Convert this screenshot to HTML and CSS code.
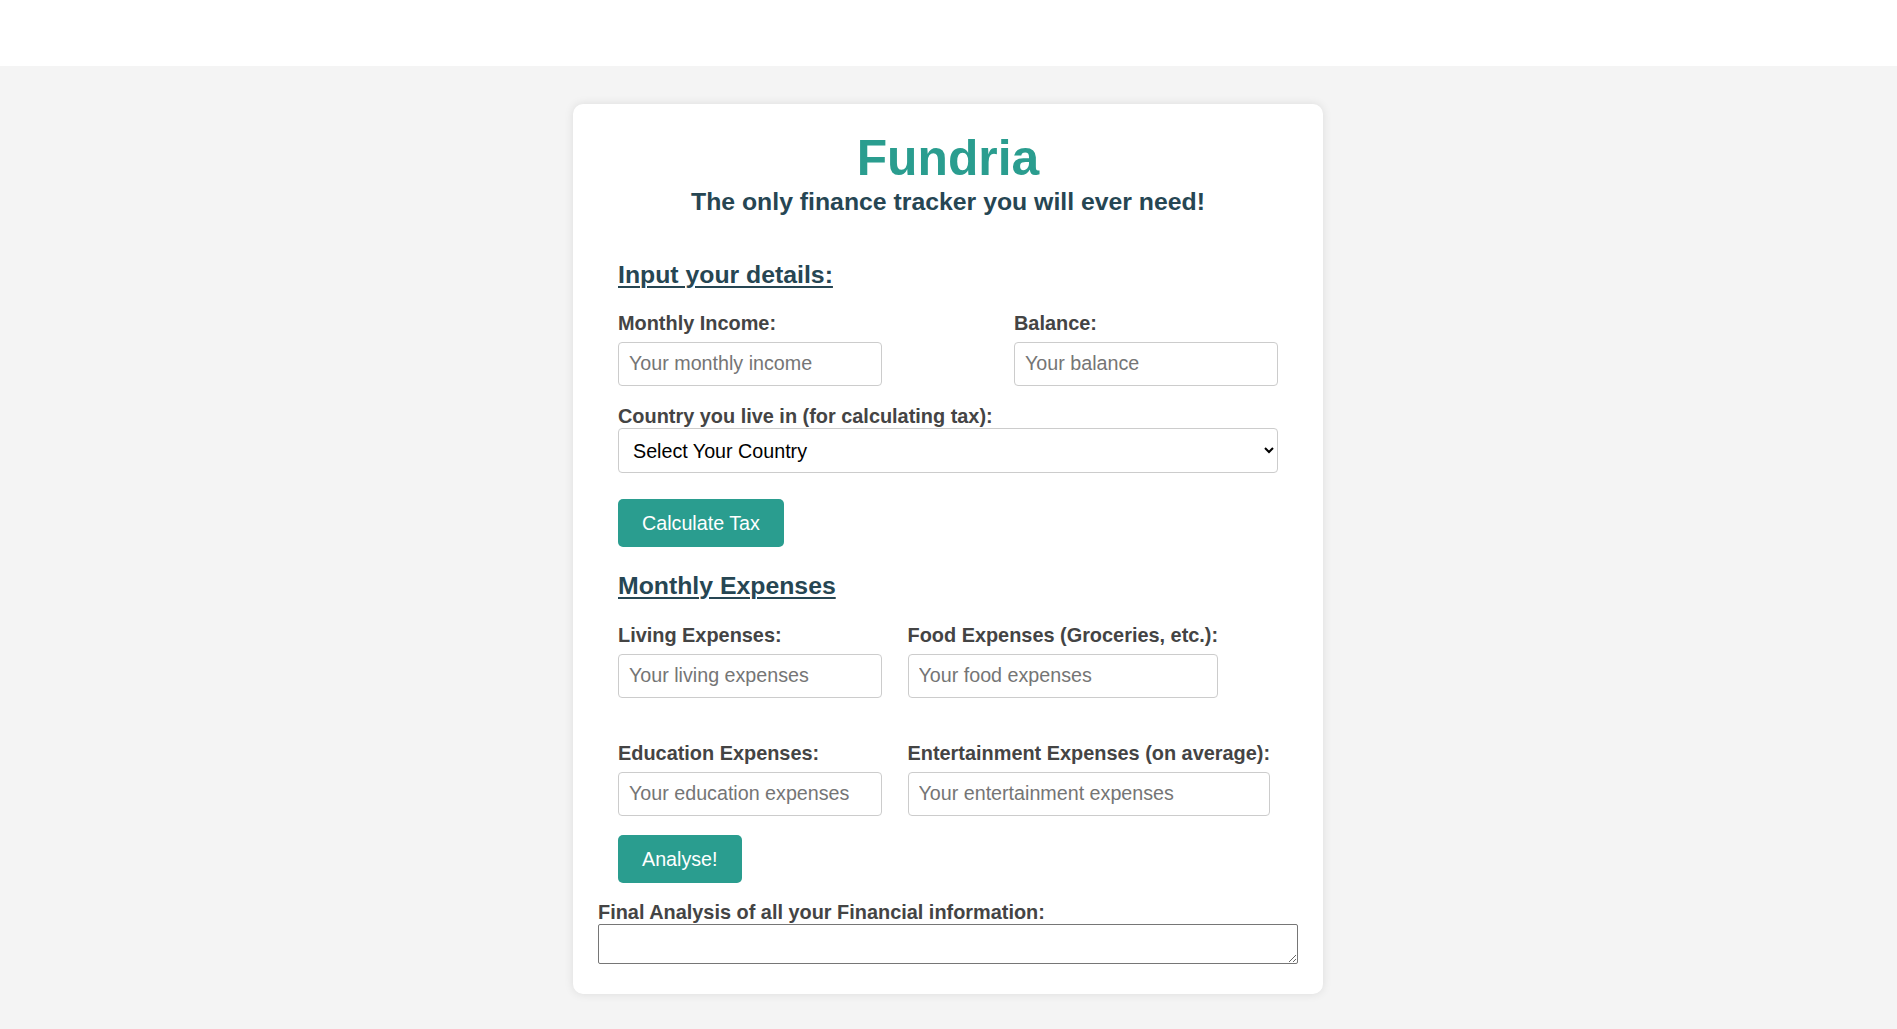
FILE: index.html
```html
<!DOCTYPE html>
<html lang="en">
<head>
<meta charset="utf-8">
<title>Fundria</title>
<link rel="stylesheet" href="styles.css">
</head>
<body>
<header class="topbar"></header>
<main class="page">
  <div class="card">
    <h1 class="brand">Fundria</h1>
    <p class="tagline">The only finance tracker you will ever need!</p>
    <form class="form">
      <h2 class="section-title">Input your details:</h2>
      <div class="row row-split">
        <div class="field field-40">
          <label class="field-label">Monthly Income:</label>
          <input class="text-input" type="text" placeholder="Your monthly income">
        </div>
        <div class="field field-40">
          <label class="field-label">Balance:</label>
          <input class="text-input" type="text" placeholder="Your balance">
        </div>
      </div>
      <div class="field field-country">
        <label class="field-label">Country you live in (for calculating tax):</label>
        <select class="select-input">
          <option>Select Your Country</option>
        </select>
      </div>
      <button class="btn btn-tax" type="button">Calculate Tax</button>

      <h2 class="section-title section-title-expenses">Monthly Expenses</h2>
      <div class="row row-gap row-living">
        <div class="field field-40">
          <label class="field-label">Living Expenses:</label>
          <input class="text-input" type="text" placeholder="Your living expenses">
        </div>
        <div class="field field-fit">
          <label class="field-label">Food Expenses (Groceries, etc.):</label>
          <input class="text-input" type="text" placeholder="Your food expenses">
        </div>
      </div>
      <div class="row row-gap row-education">
        <div class="field field-40">
          <label class="field-label">Education Expenses:</label>
          <input class="text-input" type="text" placeholder="Your education expenses">
        </div>
        <div class="field field-fit">
          <label class="field-label">Entertainment Expenses (on average):</label>
          <input class="text-input" type="text" placeholder="Your entertainment expenses">
        </div>
      </div>
      <button class="btn btn-analyse" type="button">Analyse!</button>
    </form>
    <label class="field-label final-label">Final Analysis of all your Financial information:</label>
    <textarea class="final-output"></textarea>
  </div>
</main>
</body>
</html>
```

FILE: styles.css
```css
html, body {
  margin: 0;
  padding: 0;
}

body {
  background: #f4f4f4;
  font-family: "Liberation Sans", Arial, sans-serif;
  color: #444;
  min-height: 1029px;
}

.topbar {
  height: 66px;
  background: #ffffff;
}

.page {
  padding: 38px 1px 0 0;
}

.card {
  width: 700px;
  margin: 0 auto;
  padding: 25px;
  background: #ffffff;
  border-radius: 10px;
  box-shadow: 0 0 10px rgba(0, 0, 0, 0.1);
}

.brand {
  margin: 0;
  text-align: center;
  font-size: 49.8px;
  font-weight: bold;
  line-height: 59px;
  color: #2a9d8f;
}

.tagline {
  margin: 0;
  text-align: center;
  font-size: 24.8px;
  font-weight: bold;
  line-height: 28.5px;
  color: #264653;
}

.form {
  padding: 0 20px;
}

.section-title {
  margin: 44px 0 0;
  font-size: 24.8px;
  font-weight: bold;
  line-height: normal;
  color: #264653;
  text-decoration: underline;
  text-underline-offset: 3px;
  text-decoration-thickness: 2px;
}

.section-title-expenses {
  margin-top: 25px;
}

.row {
  display: flex;
}

.row-split {
  justify-content: space-between;
  margin-top: 23px;
}

.row-gap {
  gap: 25.5px;
}

.row-living {
  margin-top: 24px;
}

.row-education {
  margin-top: 44px;
}

.field-40 {
  width: 40%;
}

.field-fit {
  width: max-content;
}

.field-label {
  display: block;
  font-size: 19.9px;
  font-weight: bold;
  line-height: 22.6px;
  color: #444;
}

.text-input {
  display: block;
  box-sizing: border-box;
  width: 100%;
  height: 44px;
  margin-top: 7.5px;
  padding: 10px;
  border: 1px solid #ccc;
  border-radius: 4px;
  font-family: "Liberation Sans", Arial, sans-serif;
  font-size: 19.7px;
  line-height: 22px;
  color: #333;
  background: #fff;
}

.text-input::placeholder {
  color: #757575;
}

.field-country {
  margin-top: 19.5px;
}

.select-input {
  display: block;
  box-sizing: border-box;
  width: 100%;
  height: 45px;
  margin-top: 0.5px;
  padding: 0 10px;
  border: 1px solid #ccc;
  border-radius: 4px;
  font-family: "Liberation Sans", Arial, sans-serif;
  font-size: 19.7px;
  color: #000;
  background: #fff;
}

.btn {
  display: block;
  height: 48px;
  padding: 0 24px;
  border: none;
  border-radius: 5px;
  background: #2a9d8f;
  color: #ffffff;
  font-family: "Liberation Sans", Arial, sans-serif;
  font-size: 19.7px;
  line-height: 48px;
}

.btn-tax {
  margin-top: 25.5px;
}

.btn-analyse {
  margin-top: 19.5px;
}

.final-label {
  margin-top: 18px;
}

.final-output {
  display: block;
  box-sizing: border-box;
  width: 100%;
  height: 40px;
  margin: 0 0 5.5px;
  border: 1px solid #767676;
  border-radius: 2px;
  resize: both;
}
```
